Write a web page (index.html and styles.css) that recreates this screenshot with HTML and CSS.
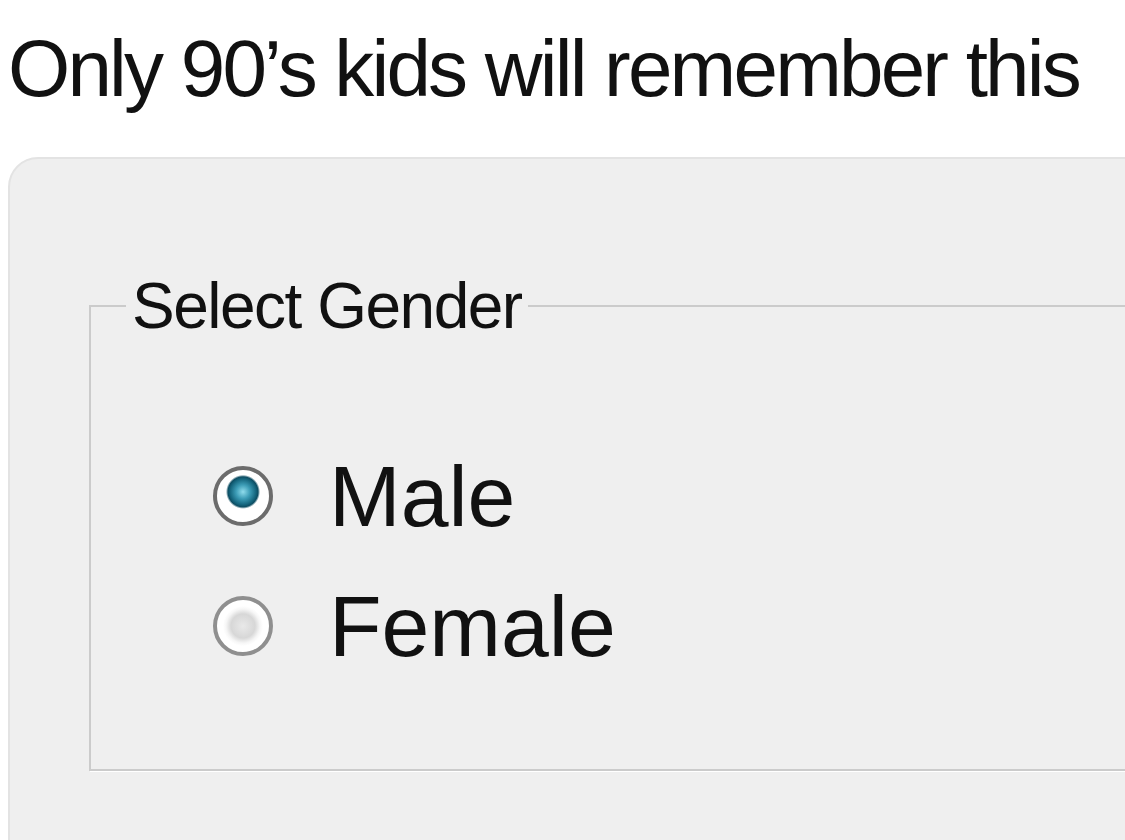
FILE: index.html
```html
<!DOCTYPE html>
<html lang="en">
<head>
    <meta charset="UTF-8">
    <meta name="viewport" content="width=device-width, initial-scale=1.0">
    <title>Only 90's kids will remember this</title>
    <link rel="stylesheet" href="styles.css">
</head>
<body>
    <h1 class="caption">Only 90’s kids will remember this</h1>

    <!-- Janela estilo Windows -->
    <div class="window">
        <fieldset class="group">
            <legend>Select Gender</legend>

            <label class="option">
                <input type="radio" name="gender" value="male" checked>
                <span>Male</span>
            </label>
            <label class="option">
                <input type="radio" name="gender" value="female">
                <span>Female</span>
            </label>
        </fieldset>
    </div>
</body>
</html>
```

FILE: styles.css
```css
/* Estilos gerais */
body {
    margin: 0;
    background-color: #fff;
    font-family: "Liberation Sans", Arial, sans-serif;
    color: #111;
    overflow: hidden;
    height: 840px;
}

.caption {
    margin: 23px 0 42px 8px;
    font-size: 80px;
    font-weight: normal;
    letter-spacing: -2.8px;
    line-height: 92px;
    white-space: nowrap;
}

/* Janela */
.window {
    margin-left: 8px;
    width: 1250px;
    height: 760px;
    padding: 110px 0 0 79px;
    box-sizing: border-box;
    background-color: #efefef;
    border: 2px solid #e3e3e3;
    border-radius: 30px;
}

.group {
    margin: 0;
    padding: 88px 0 78px 35px;
    border: 2px solid #cbcbcb;
    box-shadow: 1px 1px 0 #fff;
}

.group legend {
    padding: 0 6px;
    font-family: "Liberation Sans", Tahoma, sans-serif;
    font-size: 64px;
    letter-spacing: -1.5px;
    line-height: 74px;
}

.option {
    display: flex;
    align-items: center;
    height: 130px;
    margin-left: 87px;
    font-size: 86px;
    cursor: pointer;
}

.option input {
    appearance: none;
    -webkit-appearance: none;
    margin: 0 56px 0 0;
    width: 60px;
    height: 60px;
    border-radius: 50%;
    border: 4px solid #8f8f8f;
    background: radial-gradient(circle at 50% 50%, #e9e9e9 0, #d7d7d7 12px, #f6f6f6 17px, #fff 20px, #fff 26px);
    box-sizing: border-box;
    flex-shrink: 0;
}

.option input:checked {
    border-color: #6c6c6c;
    background: radial-gradient(circle at 50% 42%, #8fdcec 0, #3c9cb6 7px, #14647c 13px, #0d4d62 15px, #fff 17px, #fff 26px);
}
```
